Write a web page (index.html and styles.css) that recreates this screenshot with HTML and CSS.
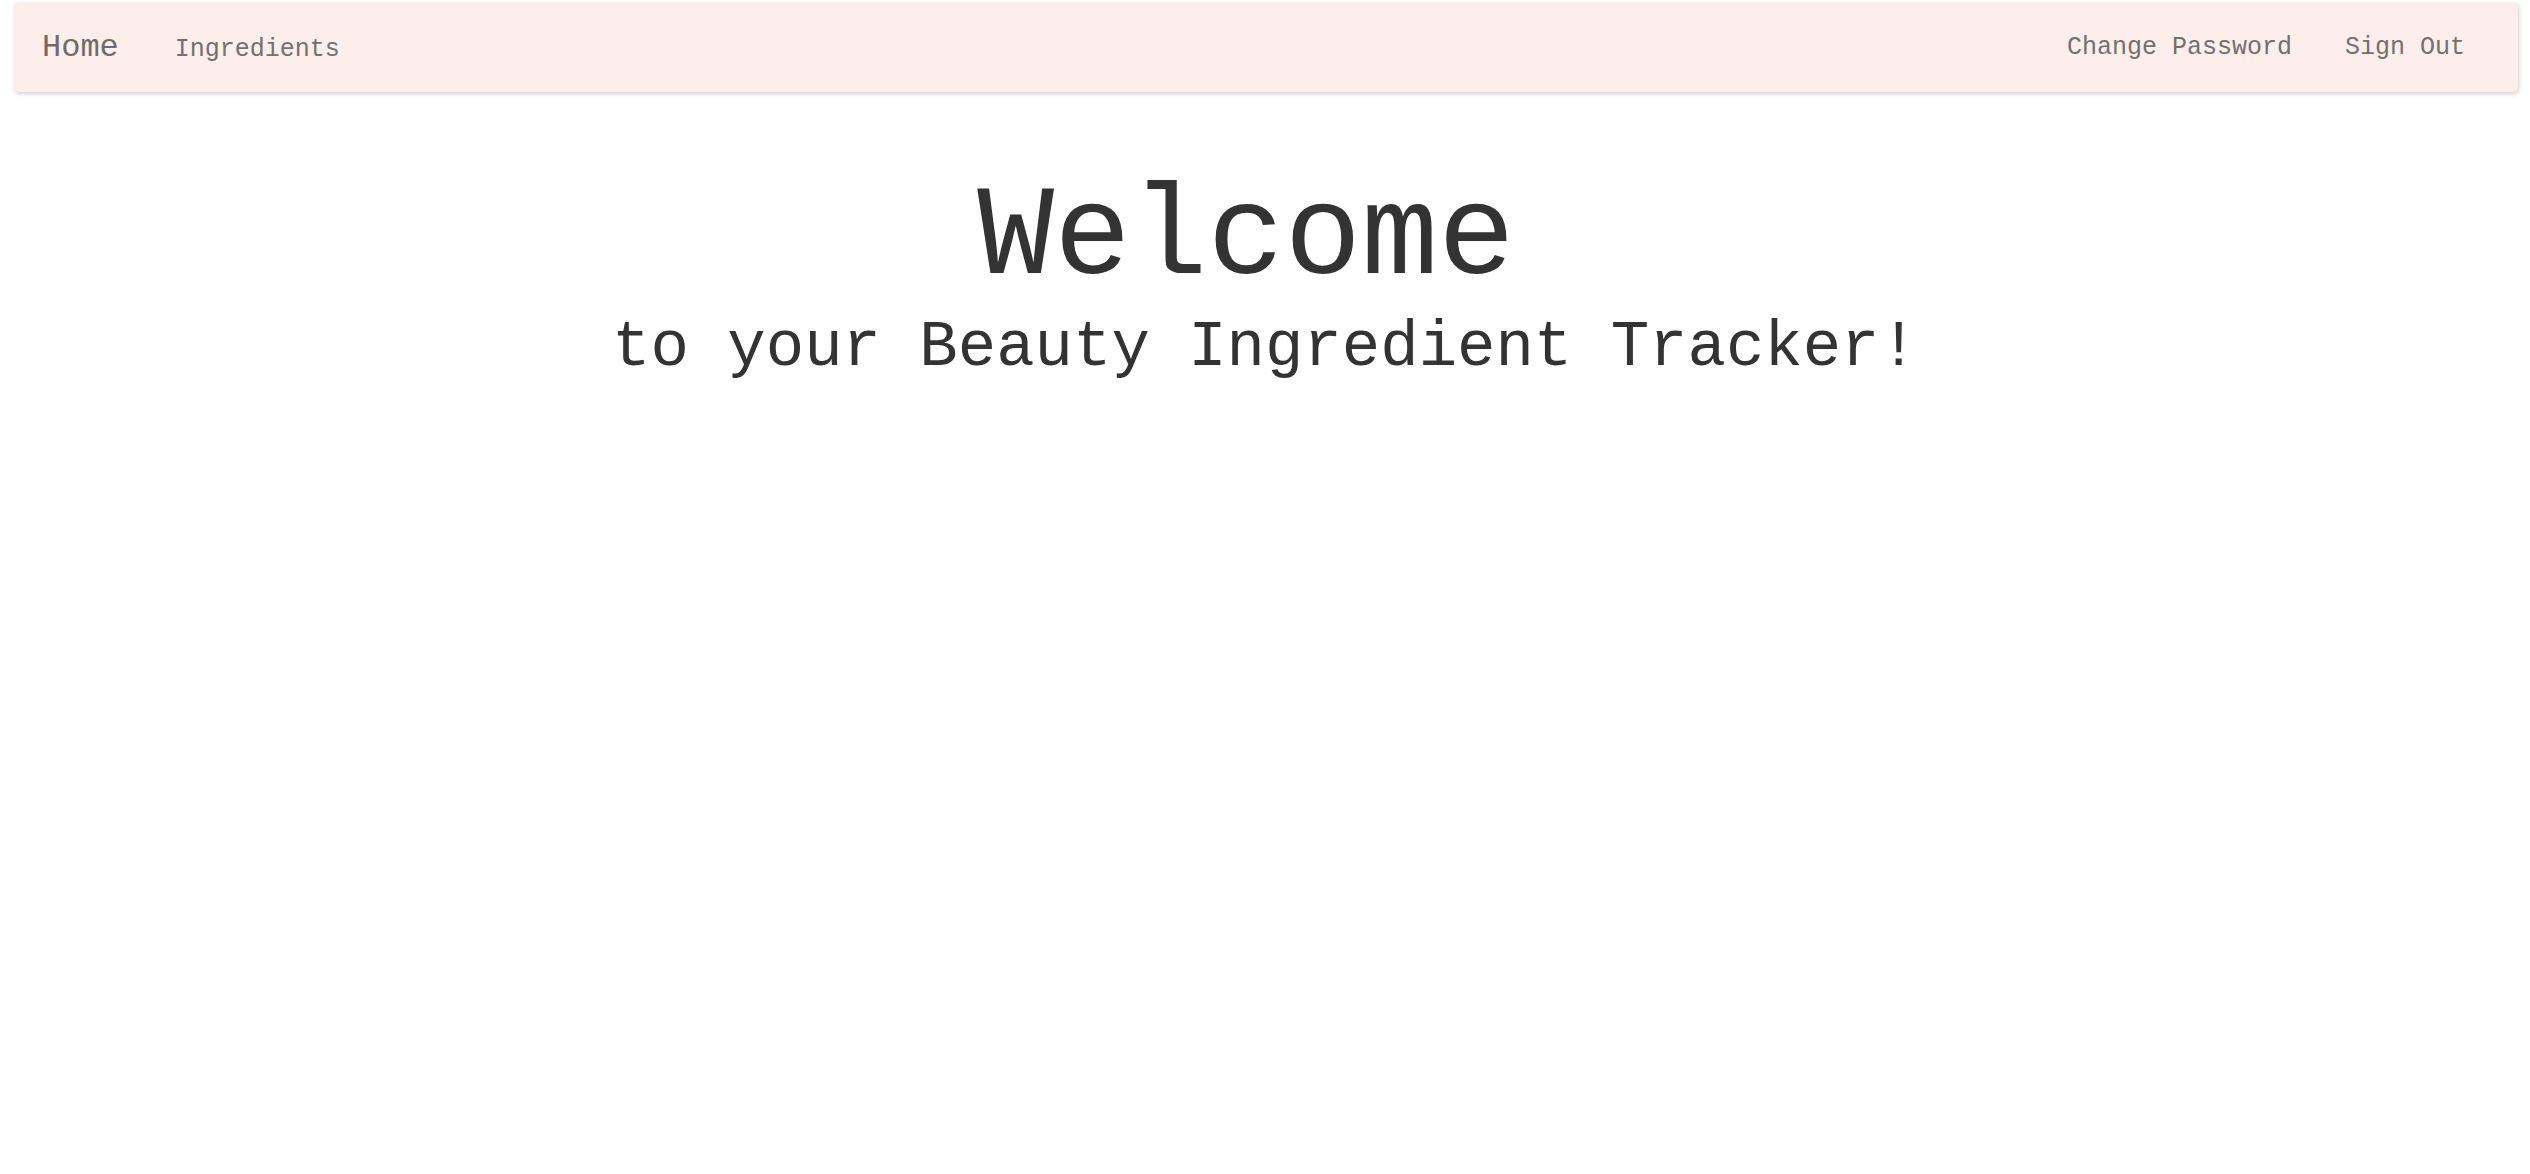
FILE: index.html
```html
<!DOCTYPE html>
<html>
<head>
<meta charset="utf-8">
<link rel="stylesheet" href="styles.css">
</head>
<body>
<nav class="navbar">
  <div class="nav-left">
    <a class="brand" href="#">Home</a>
    <a class="nav-link" href="#">Ingredients</a>
  </div>
  <div class="nav-right">
    <a class="nav-link" href="#">Change Password</a>
    <a class="nav-link" href="#">Sign Out</a>
  </div>
</nav>
<main class="hero">
  <h1 class="title">Welcome</h1>
  <h2 class="subtitle">to your Beauty Ingredient Tracker!</h2>
</main>
</body>
</html>
```
FILE: styles.css
```css
html, body {
  margin: 0;
  padding: 0;
  background: #ffffff;
}
body {
  font-family: "Liberation Mono", "Courier New", monospace;
  color: #333333;
}
.navbar {
  margin: 2px 12px 0 14px;
  height: 90px;
  background: #fdeeeb;
  border-radius: 5px;
  box-shadow: 1px 2px 4px rgba(0,0,0,0.18);
  display: flex;
  align-items: center;
  justify-content: space-between;
  padding: 0 53px 0 28px;
}
.nav-left, .nav-right {
  display: flex;
  align-items: baseline;
}
.nav-left { gap: 56px; }
.nav-right { gap: 53px; }
.brand {
  font-size: 32px;
  color: #6f6b6b;
  text-decoration: none;
}
.nav-link {
  font-size: 25px;
  color: #737070;
  text-decoration: none;
}
.hero {
  text-align: center;
  padding-top: 83px;
}
.title {
  margin: 0;
  padding-right: 38px;
  font-size: 128px;
  font-weight: normal;
  line-height: 1;
}
.subtitle {
  margin: 7px 0 0;
  font-size: 64px;
  font-weight: normal;
  line-height: 1.2;
}
```
